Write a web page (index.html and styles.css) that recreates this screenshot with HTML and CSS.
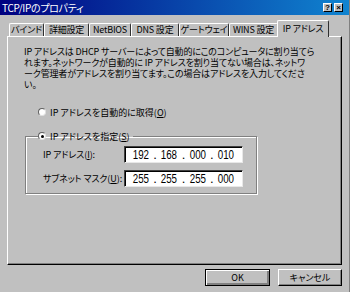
FILE: index.html
```html
<!DOCTYPE html>
<html lang="ja">
<head>
<meta charset="utf-8">
<link rel="stylesheet" href="styles.css">
</head>
<body>
<div class="win">
  <div class="titlebar">
    <span class="title">TCP/IPのプロパティ</span>
    <span class="cap">?</span>
    <span class="cap x">×</span>
  </div>
  <div class="tabs">
    <div class="tab w1">バインド</div>
    <div class="tab w2">詳細設定</div>
    <div class="tab w3">NetBIOS</div>
    <div class="tab w4">DNS 設定</div>
    <div class="tab w5">ゲートウェイ</div>
    <div class="tab w6">WINS 設定</div>
    <div class="tab sel">IP アドレス</div>
  </div>
  <div class="panel">
    <p class="desc">
      <span class="line">IP アドレスは DHCP サーバーによって自動的にこのコンピュータに割り当てら</span>
      <span class="line">れます。ネットワークが自動的に IP アドレスを割り当てない場合は、ネットワ</span>
      <span class="line">ーク管理者がアドレスを割り当てます。この場合はアドレスを入力してくださ</span>
      <span class="line">い。</span>
    </p>
    <div class="opt auto"><span class="radio"></span><span>IP アドレスを自動的に取得(<u>O</u>)</span></div>
    <fieldset class="group">
      <legend class="opt"><span class="radio on"></span><span>IP アドレスを指定(<u>S</u>)</span></legend>
      <div class="row">
        <span class="lbl">IP アドレス(<u>I</u>):</span>
        <div class="ip"><span>192</span><b>.</b><span>168</span><b>.</b><span>000</span><b>.</b><span>010</span></div>
      </div>
      <div class="row">
        <span class="lbl">サブネット マスク(<u>U</u>):</span>
        <div class="ip"><span>255</span><b>.</b><span>255</span><b>.</b><span>255</span><b>.</b><span>000</span></div>
      </div>
    </fieldset>
  </div>
  <div class="buttons">
    <div class="btn def"><span>OK</span></div>
    <div class="btn"><span>キャンセル</span></div>
  </div>
</div>
</body>
</html>
```
FILE: styles.css
```css
html, body {
  margin: 0;
  padding: 0;
}
body {
  width: 350px;
  height: 292px;
  overflow: hidden;
  background: #c0c0c0;
  font-family: "Noto Sans CJK JP", "Noto Sans", sans-serif;
  font-feature-settings: "palt";
  font-size: 9px;
  color: #000;
}
.win {
  width: 350px;
  height: 292px;
  box-sizing: border-box;
  border-right: 1px solid #808080;
}
.titlebar {
  height: 15px;
  display: flex;
  align-items: center;
  background: linear-gradient(to right, #000080, #1084d0);
  padding: 0 6px 0 2px;
  gap: 6px;
}
.title {
  flex: 1;
  color: #fff;
  font-size: 10px;
  line-height: 15px;
  letter-spacing: -0.3px;
}
.cap {
  width: 9px;
  height: 9px;
  box-sizing: border-box;
  background: #c0c0c0;
  border-top: 1px solid #fff;
  border-left: 1px solid #fff;
  border-right: 1px solid #000;
  border-bottom: 1px solid #000;
  font-family: "Liberation Sans", sans-serif;
  font-weight: bold;
  font-size: 8px;
  line-height: 7px;
  text-align: center;
}
.cap.x {
  margin-left: -4px;
}
.tabs {
  display: flex;
  align-items: flex-end;
  height: 21px;
  padding-left: 9px;
}
.tab {
  height: 13px;
  box-sizing: border-box;
  border-top: 1px solid #fff;
  border-left: 1px solid #fff;
  border-right: 1px solid #303030;
  border-radius: 2px 2px 0 0;
  text-align: center;
  line-height: 12px;
  white-space: nowrap;
  letter-spacing: -0.2px;
}
.w1 { width: 35px; }
.w2 { width: 45px; }
.w3 { width: 42px; }
.w4 { width: 48px; }
.w5 { width: 50px; }
.w6 { width: 49px; }
.tab.sel {
  width: 52px;
  height: 17px;
  margin: 0 -2px -1px -1px;
  position: relative;
  z-index: 1;
  background: #c0c0c0;
  line-height: 15px;
}
.panel {
  margin: 0 7px;
  height: 229px;
  box-sizing: border-box;
  border-top: 1px solid #fff;
  border-left: 1px solid #fff;
  border-right: 1px solid #000;
  border-bottom: 1px solid #000;
  box-shadow: inset -1px -1px #808080;
  padding: 9px 0 0 16px;
}
.desc {
  margin: 0;
  line-height: 11px;
}
.line {
  display: block;
  white-space: nowrap;
  letter-spacing: -0.15px;
}
.opt {
  display: flex;
  align-items: center;
  gap: 4px;
  white-space: nowrap;
}
.auto {
  margin: 16px 0 0 14px;
  height: 12px;
}
.radio {
  width: 8px;
  height: 8px;
  box-sizing: border-box;
  border-radius: 50%;
  background: #fff;
  border: 1px solid;
  border-color: #606060 #e0e0e0 #e0e0e0 #606060;
  display: flex;
  align-items: center;
  justify-content: center;
}
.radio.on::after {
  content: "";
  width: 3px;
  height: 3px;
  border-radius: 50%;
  background: #000;
}
.group {
  margin: 12px 0 0 1px;
  width: 232px;
  height: 64px;
  box-sizing: border-box;
  border: 1px solid #808080;
  box-shadow: 1px 1px #fff, inset 1px 1px #fff;
  padding: 4px 0 0 17px;
}
.group legend {
  padding: 0 3px 0 0;
  margin-left: -5px;
  height: 12px;
}
.row {
  display: flex;
  align-items: center;
  height: 17px;
  margin-bottom: 7px;
}
.lbl {
  width: 81px;
  white-space: nowrap;
  letter-spacing: -0.1px;
}
.ip {
  width: 119px;
  height: 17px;
  box-sizing: border-box;
  background: #fff;
  border-top: 1px solid #404040;
  border-left: 1px solid #404040;
  border-right: 1px solid #e8e8e8;
  border-bottom: 1px solid #e8e8e8;
  box-shadow: inset 1px 1px #000;
  display: flex;
  align-items: center;
  justify-content: space-between;
  padding: 0 5px 0 5px;
  font-family: "Liberation Sans", sans-serif;
  font-size: 13px;
}
.ip span {
  display: inline-block;
  transform: scaleX(0.75);
}
.ip b {
  font-weight: normal;
}
.buttons {
  display: flex;
  justify-content: flex-end;
  gap: 8px;
  padding: 4px 7px 0 0;
}
.btn {
  width: 64px;
  height: 17px;
  box-sizing: border-box;
  border-top: 1px solid #fff;
  border-left: 1px solid #fff;
  border-right: 1px solid #000;
  border-bottom: 1px solid #000;
  box-shadow: inset -1px -1px #808080;
  display: flex;
  align-items: center;
  justify-content: center;
  font-size: 9px;
}
.btn.def {
  border: 1px solid #000;
  box-shadow: inset 1px 1px #fff, inset -2px -2px #808080;
  width: 65px;
}
```
